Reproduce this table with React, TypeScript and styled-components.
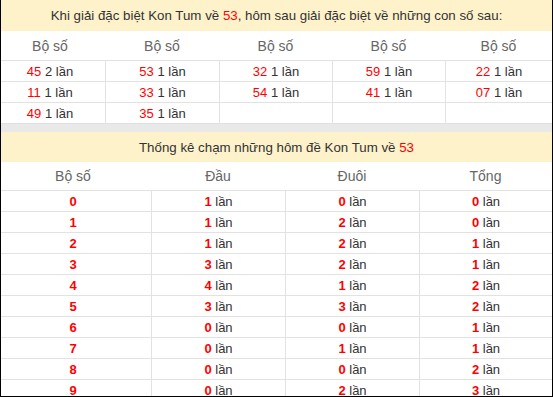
import React from "react";
import styled, { createGlobalStyle } from "styled-components";

const Global = createGlobalStyle`
  html, body { margin: 0; padding: 0; background: #fff; }
  body { font-family: "Liberation Sans", Arial, sans-serif; }
  * { box-sizing: border-box; }
`;

const Frame = styled.div`
  width: 553px;
  height: 397px;
  overflow: hidden;
  border-left: 1px solid #000;
  border-right: 1px solid #000;
  border-bottom: 1px solid #000;
  background: #fff;
  color: #333;
`;

const Title = styled.div<{ $h: number }>`
  height: ${(p) => p.$h}px;
  background: #fef2cb;
  display: flex;
  align-items: center;
  justify-content: center;
  font-size: 13.3px;
  color: #333;
  white-space: nowrap;
`;

const Red = styled.span<{ $bold?: boolean }>`
  color: #f00;
  font-weight: ${(p) => (p.$bold ? 700 : 400)};
`;

const Grid = styled.div<{ $cols: string }>`
  display: grid;
  grid-template-columns: ${(p) => p.$cols};
`;

const HeadCell = styled.div<{ $h: number; $first?: boolean }>`
  height: ${(p) => p.$h}px;
  padding-right: ${(p) => (p.$first ? "6px" : "0")};
  display: flex;
  align-items: center;
  justify-content: center;
  font-size: 14px;
  color: #666;
`;

const Cell = styled.div<{ $first?: boolean }>`
  height: 21px;
  border-top: 1px solid #e2e2e2;
  border-left: ${(p) => (p.$first ? "none" : "1px solid #e2e2e2")};
  padding-right: ${(p) => (p.$first ? "6px" : "0")};
  display: flex;
  align-items: center;
  justify-content: center;
  font-size: 13px;
  color: #333;
  white-space: nowrap;
`;

const Gap = styled.div`
  height: 9px;
  background: #e9e9e9;
  border-top: 1px solid #e0e0e0;
`;

const pairs: (null | [string, number])[][] = [
  [["45", 2], ["53", 1], ["32", 1], ["59", 1], ["22", 1]],
  [["11", 1], ["33", 1], ["54", 1], ["41", 1], ["07", 1]],
  [["49", 1], ["35", 1], null, null, null],
];

const stats: [number, number, number][] = [
  [1, 0, 0],
  [1, 2, 0],
  [1, 2, 1],
  [3, 2, 1],
  [4, 1, 2],
  [3, 3, 2],
  [0, 0, 1],
  [0, 1, 1],
  [0, 0, 2],
  [0, 2, 3],
];

export default function App() {
  return (
    <>
      <Global />
      <Frame>
        <Title $h={31}>
          Khi giải đặc biệt Kon Tum về&nbsp;<Red>53</Red>, hôm sau giải đặc biệt về những con số sau:
        </Title>
        <Grid $cols="104px 114px 113px 113px 107px">
          {[0, 1, 2, 3, 4].map((i) => (
            <HeadCell key={i} $h={29} $first={i === 0}>Bộ số</HeadCell>
          ))}
          {pairs.map((row, r) =>
            row.map((c, i) => (
              <Cell key={`${r}-${i}`} $first={i === 0}>
                {c ? (
                  <>
                    <Red>{c[0]}</Red>&nbsp;{c[1]} lần
                  </>
                ) : null}
              </Cell>
            ))
          )}
        </Grid>
        <Gap />
        <Title $h={30}>
          Thống kê chạm những hôm đề Kon Tum về&nbsp;<Red>53</Red>
        </Title>
        <Grid $cols="150px 134px 134px 133px">
          {["Bộ số", "Đầu", "Đuôi", "Tổng"].map((h, i) => (
            <HeadCell key={h} $h={28} $first={i === 0}>{h}</HeadCell>
          ))}
          {stats.map((s, r) => (
            <React.Fragment key={r}>
              <Cell $first>
                <Red $bold>{r}</Red>
              </Cell>
              {s.map((v, i) => (
                <Cell key={i}>
                  <Red $bold>{v}</Red>&nbsp;lần
                </Cell>
              ))}
            </React.Fragment>
          ))}
        </Grid>
      </Frame>
    </>
  );
}
